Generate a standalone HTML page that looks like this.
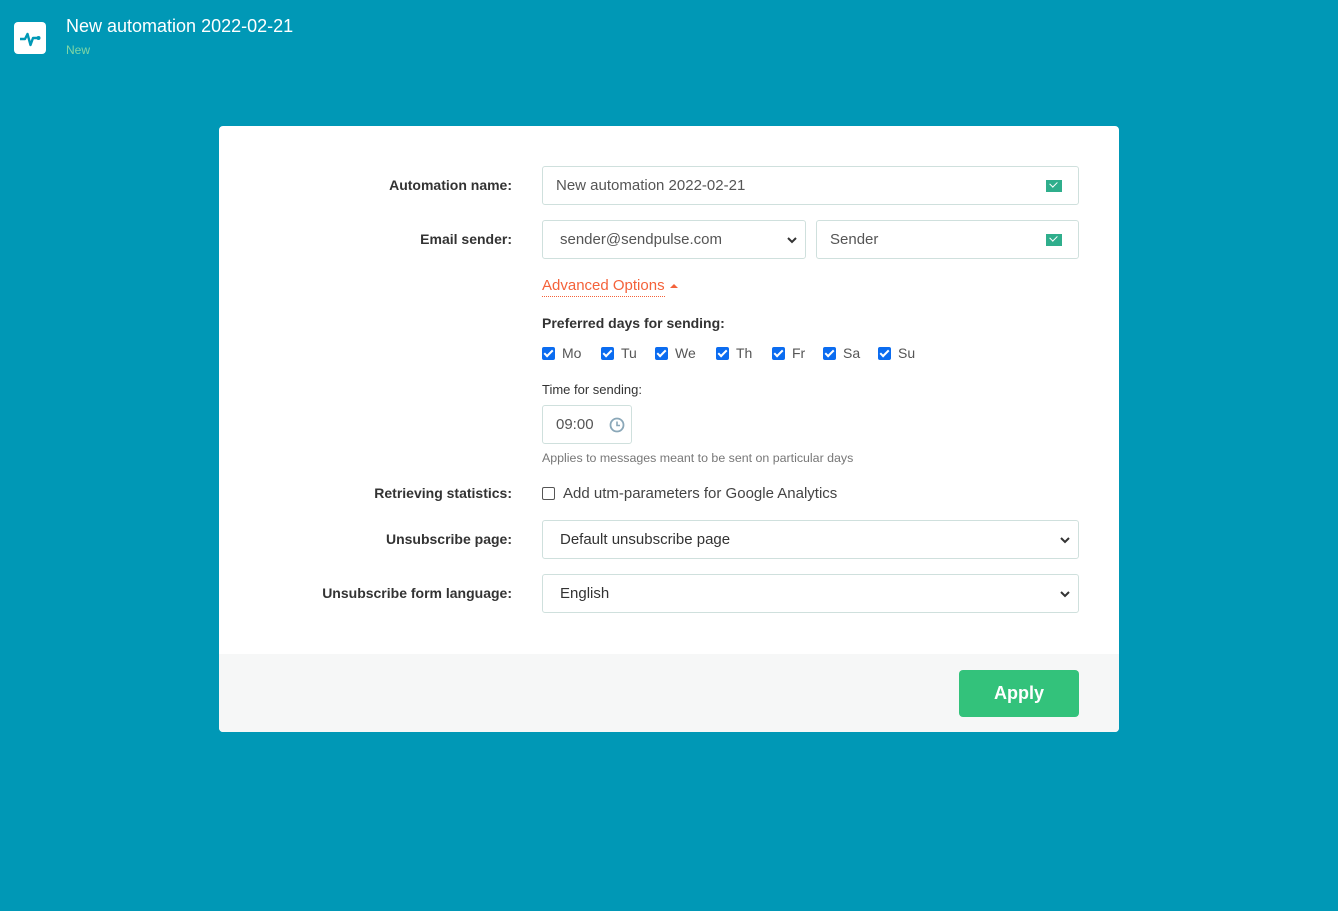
<!DOCTYPE html>
<html><head><meta charset="utf-8"><style>
*{box-sizing:border-box;margin:0;padding:0}
body{width:1338px;height:911px;background:#0098b6;font-family:"Liberation Sans",sans-serif;position:relative;overflow:hidden;color:#333}
.a{position:absolute}
.logo{left:14px;top:22px;width:32px;height:32px;background:#fff;border-radius:4px}
.title{left:66px;top:16px;color:#fff;font-size:18px}
.new{left:66px;top:43px;color:#7fd6a6;font-size:12px}
.card{left:219px;top:126px;width:900px;height:606px;background:#fff;border-radius:4px;overflow:hidden}
.foot{left:0;top:528px;width:900px;height:78px;background:#f6f7f7}
.lbl{right:607px;font-size:14px;font-weight:bold;color:#333;text-align:right;white-space:nowrap}
.inp{border:1px solid #cfe0dd;border-radius:3px;height:39px;font-size:15px;color:#555;padding-left:13px;line-height:37px;background:#fff}
.chev{position:absolute;right:6px;top:0}
.env{position:absolute;right:16px;top:13px;width:16px;height:12px;background:#2fae8c}
.env:after{content:"";position:absolute;left:4px;top:1px;width:6px;height:4px;border-left:1.5px solid #fff;border-bottom:1.5px solid #fff;transform:rotate(-45deg)}
.cb{display:inline-block;width:13px;height:13px;background:#0b6cf0;border-radius:2px;position:relative;vertical-align:-2px;margin-right:7px}
.cb:after{content:"";position:absolute;left:4px;top:1px;width:3px;height:7px;border-right:2px solid #fff;border-bottom:2px solid #fff;transform:rotate(45deg)}
.day{position:absolute;top:0;font-size:14px;color:#555}
</style></head><body>
<div class="a logo"><svg width="32" height="32" viewBox="0 0 32 32"><path d="M6 17h5l2.5-5 3 11 2.5-7h4" fill="none" stroke="#0098b6" stroke-width="2.4" stroke-linejoin="round"/><circle cx="24.5" cy="16" r="2" fill="#0098b6"/></svg></div>
<div class="a title">New automation 2022-02-21</div>
<div class="a new">New</div>
<div class="a card">
 <div class="a lbl" style="top:51px">Automation name:</div>
 <div class="a inp" style="left:323px;top:40px;width:537px">New automation 2022-02-21<span class="env"></span></div>
 <div class="a lbl" style="top:105px">Email sender:</div>
 <div class="a inp" style="left:323px;top:94px;width:264px;padding-left:17px">sender@sendpulse.com<svg class="chev" width="14" height="37" viewBox="0 0 14 37"><path d="M3 17l4 4 4-4" fill="none" stroke="#333" stroke-width="2"/></svg></div>
 <div class="a inp" style="left:597px;top:94px;width:263px">Sender<span class="env"></span></div>
 <div class="a" style="left:323px;top:151px;font-size:15px;color:#f4623a;border-bottom:1px dotted #f4623a;padding-bottom:2px">Advanced Options</div>
 <div class="a" style="left:451px;top:158px;width:0;height:0;border-left:4px solid transparent;border-right:4px solid transparent;border-bottom:4px solid #f4623a"></div>
 <div class="a" style="left:323px;top:189px;font-size:14px;font-weight:bold">Preferred days for sending:</div>
 <div class="a" style="left:323px;top:219px;width:500px;height:20px">
  <span class="day" style="left:0"><span class="cb"></span>Mo</span>
  <span class="day" style="left:59px"><span class="cb"></span>Tu</span>
  <span class="day" style="left:113px"><span class="cb"></span>We</span>
  <span class="day" style="left:174px"><span class="cb"></span>Th</span>
  <span class="day" style="left:230px"><span class="cb"></span>Fr</span>
  <span class="day" style="left:281px"><span class="cb"></span>Sa</span>
  <span class="day" style="left:336px"><span class="cb"></span>Su</span>
 </div>
 <div class="a" style="left:323px;top:256px;font-size:13px;color:#333">Time for sending:</div>
 <div class="a inp" style="left:323px;top:279px;width:90px">09:00<svg style="position:absolute;right:6px;top:11px" width="16" height="16" viewBox="0 0 16 16"><circle cx="8" cy="8" r="6.5" fill="none" stroke="#8aa7b8" stroke-width="1.8"/><path d="M8 4.5V8.5h3" fill="none" stroke="#8aa7b8" stroke-width="1.6"/></svg></div>
 <div class="a" style="left:323px;top:325px;font-size:12.4px;color:#777">Applies to messages meant to be sent on particular days</div>
 <div class="a lbl" style="top:359px">Retrieving statistics:</div>
 <div class="a" style="left:323px;top:359px;font-size:15px;color:#444"><span style="display:inline-block;width:13px;height:13px;border:1px solid #555;border-radius:2px;vertical-align:-2px;margin-right:8px"></span>Add utm-parameters for Google Analytics</div>
 <div class="a lbl" style="top:405px">Unsubscribe page:</div>
 <div class="a inp" style="left:323px;top:394px;width:537px;color:#333;padding-left:17px">Default unsubscribe page<svg class="chev" width="14" height="37" viewBox="0 0 14 37"><path d="M3 17l4 4 4-4" fill="none" stroke="#333" stroke-width="2"/></svg></div>
 <div class="a lbl" style="top:459px">Unsubscribe form language:</div>
 <div class="a inp" style="left:323px;top:448px;width:537px;color:#333;padding-left:17px">English<svg class="chev" width="14" height="37" viewBox="0 0 14 37"><path d="M3 17l4 4 4-4" fill="none" stroke="#333" stroke-width="2"/></svg></div>
 <div class="a foot"><div class="a" style="left:740px;top:16px;width:120px;height:47px;background:#33c27b;border-radius:4px;color:#fff;font-weight:bold;font-size:18px;text-align:center;line-height:47px">Apply</div></div>
</div>
</body></html>
